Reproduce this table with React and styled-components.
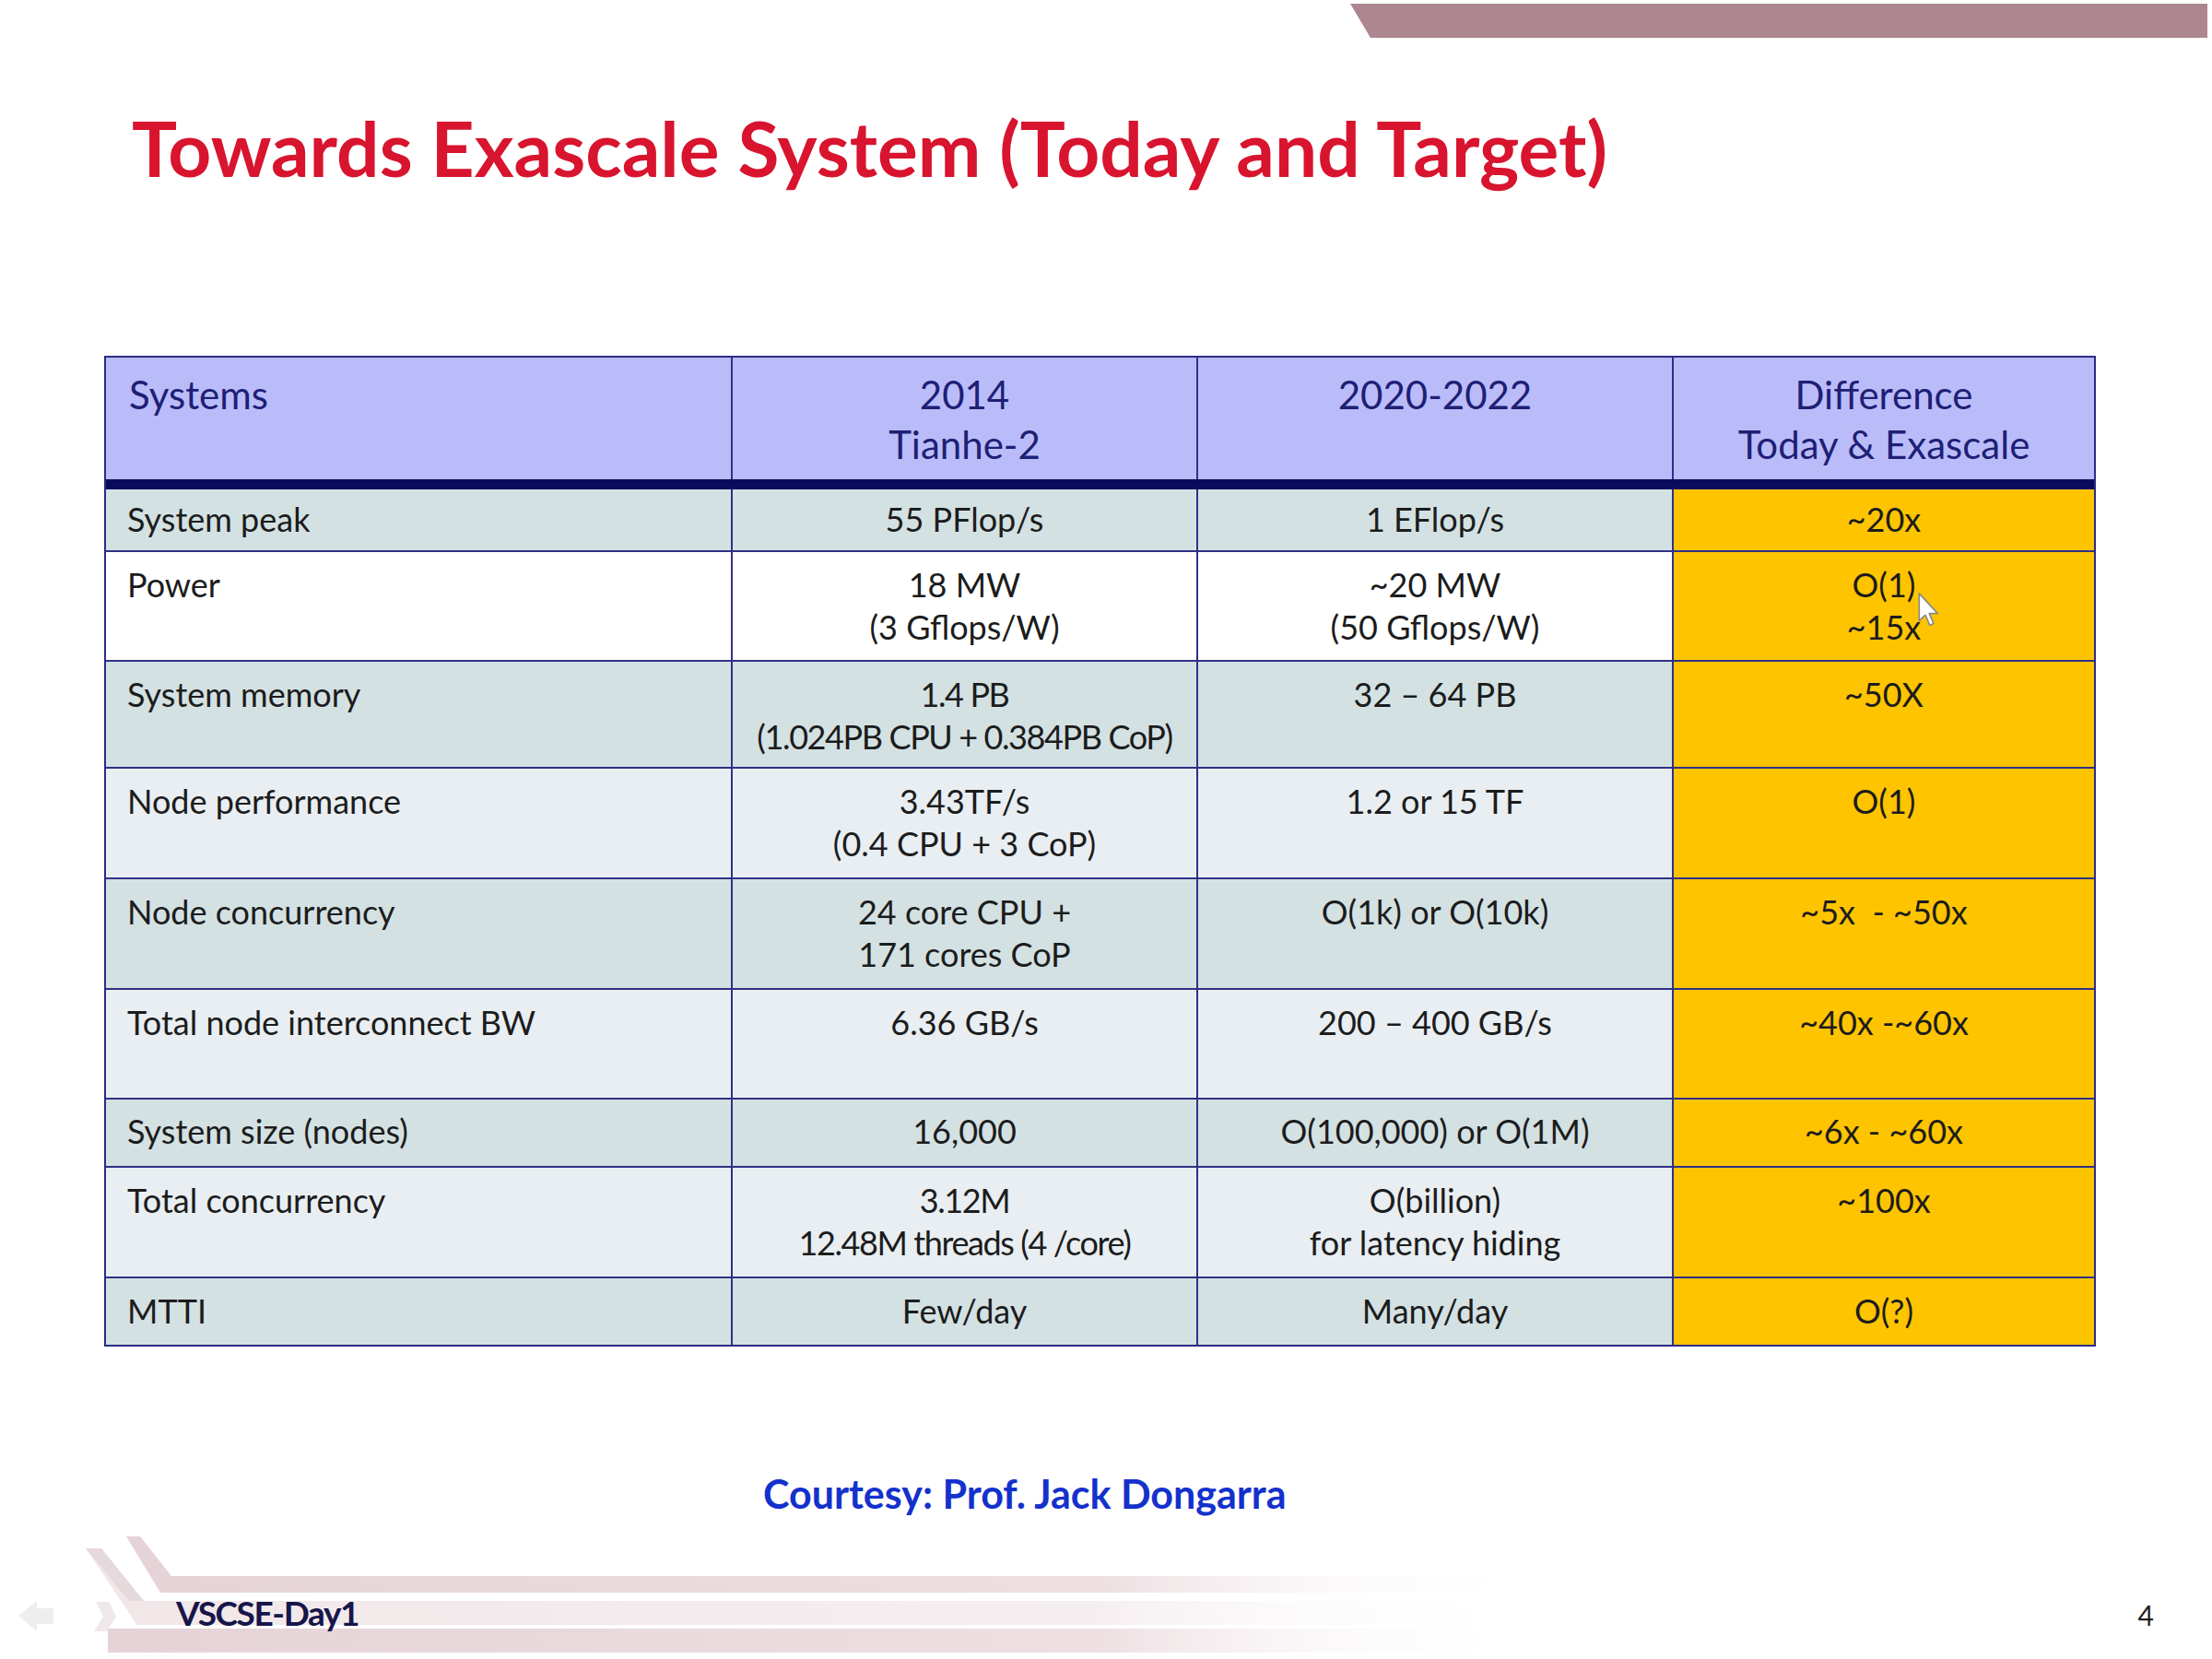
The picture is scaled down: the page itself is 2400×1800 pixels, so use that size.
import React from 'react';
import styled, { createGlobalStyle } from 'styled-components';

const GlobalStyle = createGlobalStyle`
  html, body {
    margin: 0;
    padding: 0;
    background: #ffffff;
  }
  body {
    font-family: Lato, "Noto Sans", sans-serif;
  }
`;

const Slide = styled.div`
  position: relative;
  width: 2400px;
  height: 1800px;
  overflow: hidden;
  background: #ffffff;
  display: flex;
  flex-direction: column;
`;

const TopBar = styled.div`
  margin: 4px 5px 0 1465px;
  height: 37px;
  background: #ad8690;
  clip-path: polygon(0 0, 100% 0, 100% 100%, 22px 100%);
`;

const Title = styled.h1`
  margin: 70px 0 0 143px;
  font-size: 82px;
  font-weight: 700;
  line-height: 98px;
  color: #d8142e;
`;

const Table = styled.div`
  margin: 177px 0 0 113px;
  width: 2161px;
  box-sizing: border-box;
  border: 2px solid #2b2d84;
`;

const Row = styled.div`
  display: grid;
  grid-template-columns: 680px 505px 516px 456px;
  height: ${(p) => p.$h}px;
  box-sizing: border-box;
  border-bottom: ${(p) => (p.$head ? '11px solid #0b0b5e' : '2px solid #2f3185')};

  &:last-child {
    border-bottom: none;
  }
`;

const Cell = styled.div`
  box-sizing: border-box;
  padding: ${(p) => p.$top ?? 12}px 16px 0 ${(p) => (p.$left ? 23 : 16)}px;
  text-align: ${(p) => (p.$left ? 'left' : 'center')};
  background: ${(p) => p.$bg};
  border-right: 2px solid #2f3185;
  font-size: 36px;
  line-height: 46px;
  letter-spacing: ${(p) => (p.$tight ? '-1.4px' : '0')};
  color: #1c1c1c;
  white-space: nowrap;

  &:last-child {
    border-right: none;
  }
`;

const HeadCell = styled(Cell)`
  padding-top: 13px;
  padding-left: ${(p) => (p.$left ? 25 : 16)}px;
  background: #babcfa;
  font-size: 42px;
  line-height: 54px;
  color: #1e2075;
`;

const Courtesy = styled.p`
  margin: 135px 0 0 828px;
  font-size: 43px;
  font-weight: 700;
  line-height: 50px;
  color: #1431cc;
`;

const Footer = styled.footer`
  position: relative;
  z-index: 1;
  margin-top: 81px;
  display: flex;
  justify-content: space-between;
  align-items: baseline;
  padding: 0 63px 0 191px;
  line-height: 46px;
`;

const FooterTag = styled.span`
  font-size: 37px;
  font-weight: 700;
  letter-spacing: -1.4px;
  color: #16164a;
`;

const PageNum = styled.span`
  font-size: 30px;
  color: #222222;
`;

const Decoration = styled.svg`
  position: absolute;
  left: 0;
  top: 1640px;
  z-index: 0;
`;

const Cursor = styled.svg`
  position: absolute;
  left: 2080px;
  top: 642px;
  z-index: 2;
`;

const tones = {
  teal: '#d3e1e3',
  white: '#ffffff',
  pale: '#e8eef2',
};
const gold = '#ffc400';

const header = [
  ['Systems'],
  ['2014', 'Tianhe-2'],
  ['2020-2022'],
  ['Difference', 'Today & Exascale'],
];

const rows = [
  { h: 68, top: 9, tone: 'teal', cells: [['System peak'], ['55 PFlop/s'], ['1 EFlop/s'], ['~20x']] },
  { h: 119, tone: 'white', cells: [['Power'], ['18 MW', '(3 Gflops/W)'], ['~20 MW', '(50 Gflops/W)'], ['O(1)', '~15x']] },
  { h: 116, tone: 'teal', tight: 1, cells: [['System memory'], ['1.4 PB', '(1.024PB CPU + 0.384PB CoP)'], ['32 – 64 PB'], ['~50X']] },
  { h: 120, tone: 'pale', cells: [['Node performance'], ['3.43TF/s', '(0.4 CPU + 3 CoP)'], ['1.2 or 15 TF'], ['O(1)']] },
  { h: 120, tone: 'teal', cells: [['Node concurrency'], ['24 core CPU +', '171 cores CoP'], ['O(1k) or O(10k)'], ['~5x  - ~50x']] },
  { h: 119, tone: 'pale', cells: [['Total node interconnect BW'], ['6.36 GB/s'], ['200 – 400 GB/s'], ['~40x -~60x']] },
  { h: 74, top: 11, tone: 'teal', cells: [['System size (nodes)'], ['16,000'], ['O(100,000) or O(1M)'], ['~6x - ~60x']] },
  { h: 120, tone: 'pale', tight: 1, cells: [['Total concurrency'], ['3.12M', '12.48M threads (4 /core)'], ['O(billion)', 'for latency hiding'], ['~100x']] },
  { h: 72, tone: 'teal', cells: [['MTTI'], ['Few/day'], ['Many/day'], ['O(?)']] },
];

function Lines({ lines }) {
  return lines.map((line, i) => <div key={i}>{line.replace(/  /g, '\u00a0 ')}</div>);
}

function FooterArt() {
  return (
    <Decoration width="1650" height="160" viewBox="0 0 1650 160">
      <defs>
        <linearGradient id="fade" x1="0" x2="1" y1="0" y2="0">
          <stop offset="0" stopColor="#e5d3d7" />
          <stop offset="0.7" stopColor="#eddfe2" />
          <stop offset="1" stopColor="#ffffff" stopOpacity="0" />
        </linearGradient>
        <linearGradient id="fadeLight" x1="0" x2="1" y1="0" y2="0">
          <stop offset="0" stopColor="#f1e7e9" />
          <stop offset="0.7" stopColor="#f5eef0" />
          <stop offset="1" stopColor="#ffffff" stopOpacity="0" />
        </linearGradient>
      </defs>
      <polygon points="137,27 152,27 186,70 1650,70 1650,88 174,88" fill="url(#fade)" />
      <polygon points="93,40 110,40 156,97 1650,97 1650,123 148,123 140,110" fill="url(#fadeLight)" />
      <polygon points="93,40 110,40 156,97 140,97" fill="#e6d9dc" />
      <rect x="117" y="127" width="1533" height="26" fill="url(#fade)" />
      <polygon points="104,98 118,98 126,114 116,130 102,130 112,114" fill="#efe8ea" />
      <polygon points="20,113 40,97 40,105 58,105 58,122 40,122 40,130" fill="#eeeeee" />
    </Decoration>
  );
}

export default function App() {
  return (
    <>
      <GlobalStyle />
      <Slide>
        <TopBar />
        <Title>Towards Exascale System (Today and Target)</Title>
        <Table>
          <Row $h={143} $head>
            {header.map((lines, i) => (
              <HeadCell key={i} $left={i === 0}>
                <Lines lines={lines} />
              </HeadCell>
            ))}
          </Row>
          {rows.map((row, r) => (
            <Row key={r} $h={row.h}>
              {row.cells.map((lines, i) => (
                <Cell
                  key={i}
                  $left={i === 0}
                  $top={row.top}
                  $tight={row.tight && i === 1}
                  $bg={i === 3 ? gold : tones[row.tone]}
                >
                  <Lines lines={lines} />
                </Cell>
              ))}
            </Row>
          ))}
        </Table>
        <Courtesy>Courtesy: Prof. Jack Dongarra</Courtesy>
        <FooterArt />
        <Footer>
          <FooterTag>VSCSE-Day1</FooterTag>
          <PageNum>4</PageNum>
        </Footer>
        <Cursor width="25" height="39" viewBox="0 0 13 21">
          <path
            d="M1 1 L1 17 L4.6 13.6 L7.2 19.6 L9.4 18.6 L6.9 12.7 L11.8 12.7 Z"
            fill="#ffffff"
            stroke="#8a8a8a"
            strokeWidth="0.9"
            strokeLinejoin="round"
          />
        </Cursor>
      </Slide>
    </>
  );
}
